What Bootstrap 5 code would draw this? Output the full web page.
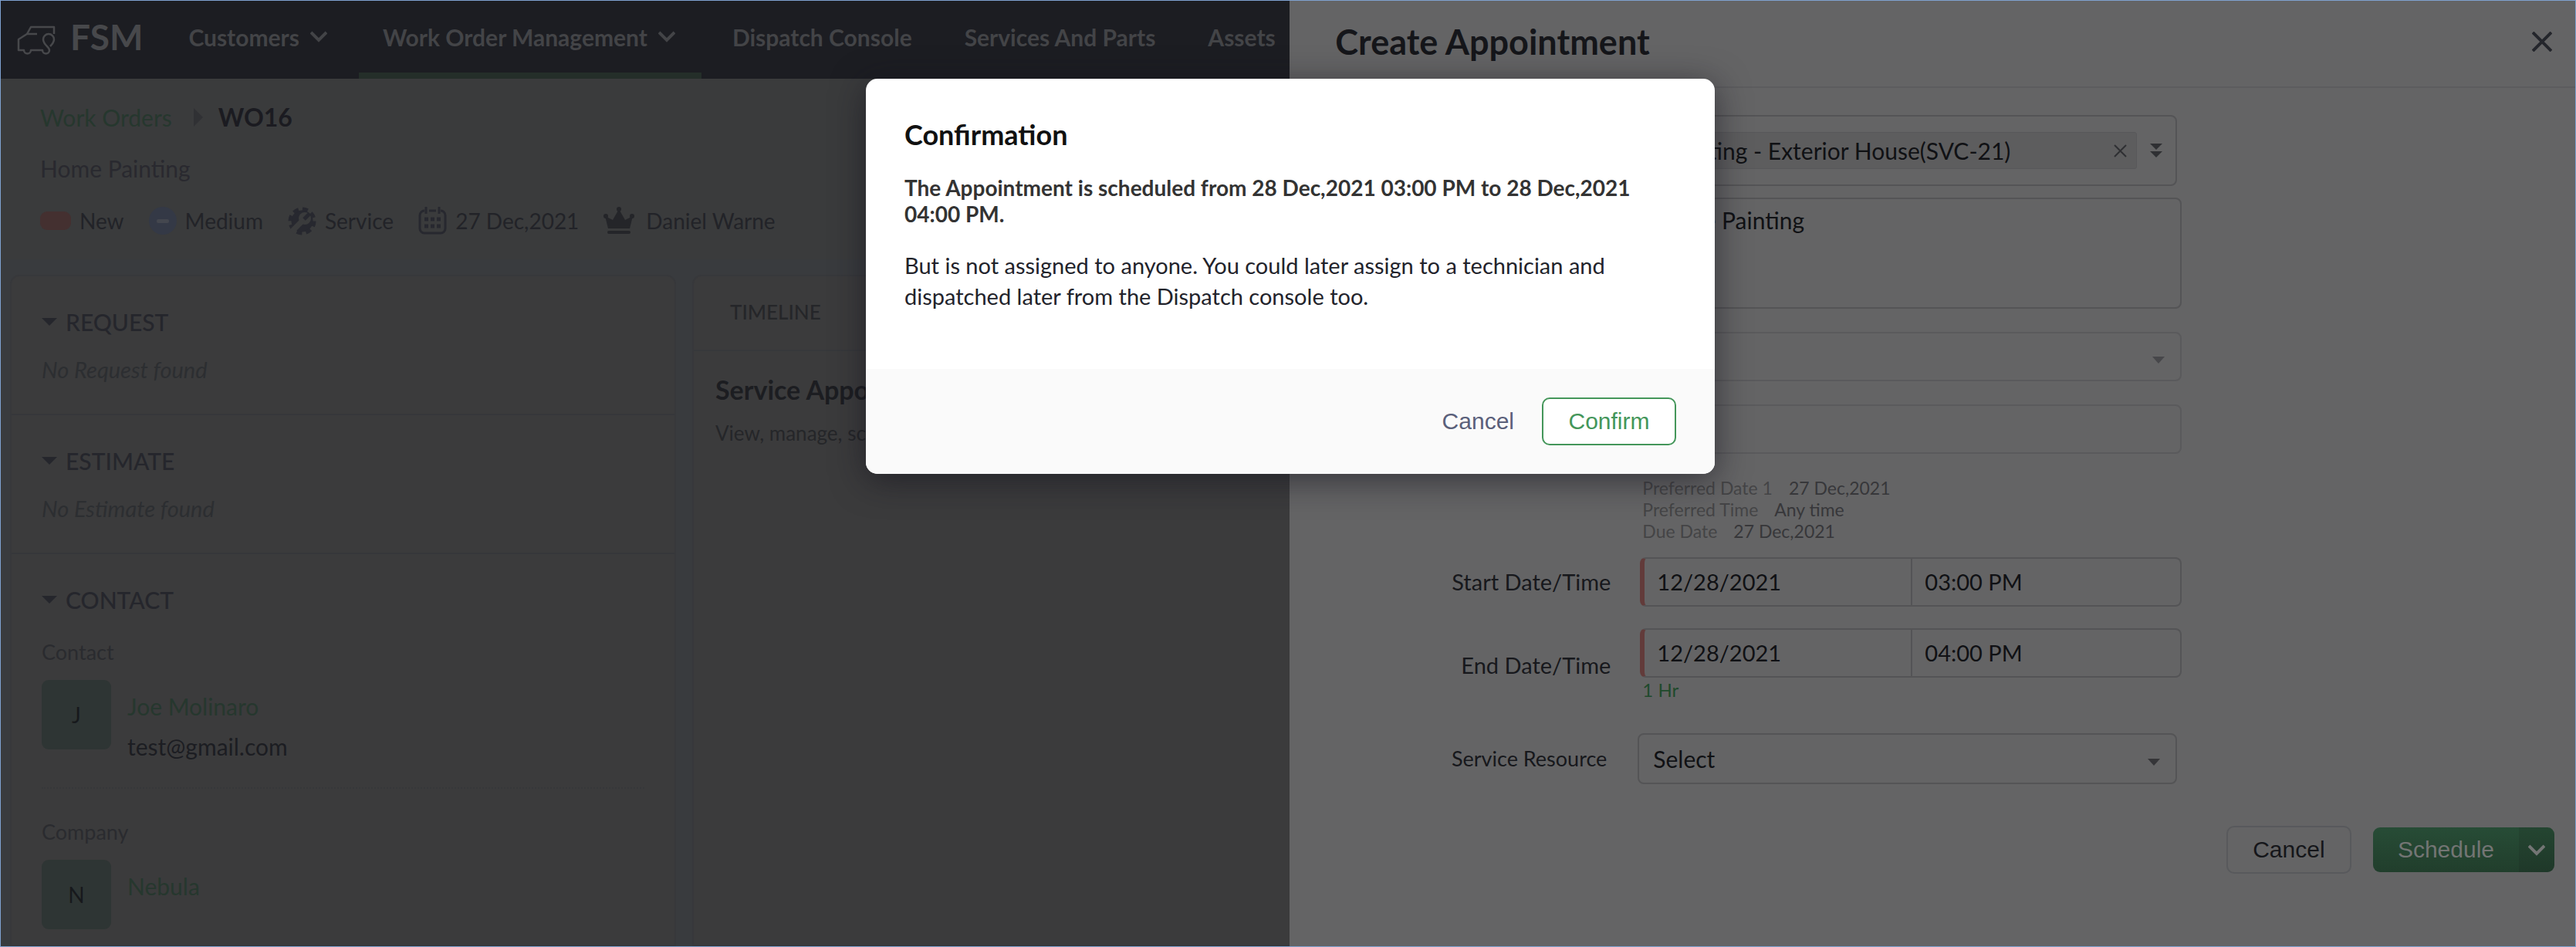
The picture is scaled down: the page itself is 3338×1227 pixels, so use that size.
<!DOCTYPE html>
<html lang="en">
<head>
<meta charset="utf-8">
<meta name="viewport" content="width=device-width, initial-scale=1">
<title>FSM - WO16</title>
<link href="https://cdn.jsdelivr.net/npm/bootstrap@5.3.0/dist/css/bootstrap.min.css" rel="stylesheet">
<style>
  body { font-family: Lato, "Liberation Sans", sans-serif; font-size: 30px; line-height: 40px; color: #1c1d22; background: #3b3b3c; }
  a { text-decoration: none; }
  svg { display: block; flex: none; }
  .app-shell { height: 100vh; overflow: hidden; border: 1px solid #7fa1d0; }
  .sans-ui { font-family: "Liberation Sans", Arial, sans-serif; }

  /* top bar */
  .top-bar { height: 101px; background: #1c1d22; padding: 0 0 8px 21px; color: #47484b; }
  .brand-name { font-size: 46px; font-weight: 700; color: #47484b; gap: 19px; margin-right: 59px; }
  .main-nav { gap: 68px; height: 101px; }
  .main-nav a { color: #434447; font-weight: 700; gap: 14px; height: 101px; padding-bottom: 8px; white-space: nowrap; }
  .main-nav .is-current { border-bottom: 8px solid #242e29; padding: 0 34px 0 31px; margin: 0 -28px 0 -27px; }

  /* work order header */
  .record-head { padding: 30px 51px 0; height: 234px; background: #3a3b3c; }
  .link-green { color: #26372e; }
  .record-id { font-size: 32px; font-weight: 700; color: #1b1b21; }
  .crumb-mark { margin: 0 20px 0 28px; }
  .record-title { color: #29292f; margin-top: 26px; }
  .record-meta { font-size: 28px; gap: 32px; color: #222328; margin-top: 28px; }
  .record-meta > span { gap: 11px; }
  .status-pill { width: 40px; height: 24px; border-radius: 9px; background: #443030; }

  /* panels */
  .panels { background: #393b3e; padding: 20px 0 0 12px; gap: 21px; flex: 1 0 0; }
  .side-card { width: 863px; background: #3b3b3c; border: 2px solid #37383b; border-radius: 12px 12px 0 0; }
  .side-card section { padding: 39px 39px 0; height: 180px; border-bottom: 2px solid #36373a; }
  .side-card section:last-child { border: 0; height: auto; }
  .side-card h2, .tab-head { font-size: 30px; line-height: 40px; font-weight: 500; margin: 0; color: #25262c; }
  .side-card h2 { gap: 11px; }
  .empty-note { font-size: 29px; font-style: italic; color: #2c2e31; margin: 22px 0 0; }
  .field-name { font-size: 27px; color: #2a2b2f; }
  .side-card h2 + .field-name { margin-top: 28px; }
  .avatar-tile { width: 90px; height: 90px; border-radius: 9px; background: #2e3534; font-size: 28px; color: #17191c; flex: none; }
  .contact-row { gap: 21px; line-height: 52px; }
  .dot-rule { border-top: 2px dotted #36373a; margin: 27px 0 36px; }

  .main-card { background: #3b3b3c; border: 2px solid #37383b; border-radius: 12px 12px 0 0; }
  .main-card .tab-head { font-size: 26px; color: #252629; padding: 26px 47px 29px; border-bottom: 2px solid #37383b; }
  .main-card h3 { font-size: 34px; line-height: 40px; font-weight: 700; color: #1c1d21; margin: 0 0 16px; }
  .main-intro { padding: 30px 28px; font-size: 26px; color: #252629; }

  /* slide-in form */
  .drawer { position: absolute; top: 1px; right: 1px; bottom: 1px; width: 49.9%; background: #646465; color: #101114; }
  .drawer-head { height: 113px; padding: 0 30px 6px 59px; border-bottom: 2px solid #5c5c5e; }
  .drawer-head h1 { font-size: 45px; font-weight: 700; margin: 0; color: #15161a; }
  .drawer-form { padding: 35px 27px 0 191px; }
  .form-line { display: grid; grid-template-columns: 225px 706px; column-gap: 35px; align-items: center; margin-bottom: 30px; }
  .form-line > label { text-align: right; color: #17181c; font-size: 29px; }
  .form-line > .label-small { font-size: 27px; padding-right: 5px; }
  .line-tight { margin-bottom: 15px; }
  .line-hints { margin-bottom: 20px; }
  .line-start { margin-bottom: 28px; }
  .line-end { margin-bottom: 40px; }
  .box { background: transparent; border: 2px solid #545456; border-radius: 8px; color: #101114; font-size: 30px; line-height: 40px; width: 702px; height: 64px; margin-left: 3px; }
  .box-narrow { width: 699px; height: 66px; margin-left: 0; }
  .box-chips { height: 92px; }
  .box-text { height: 144px; padding: 7px 16px; resize: none; }
  .box-off { border-color: #5a5a5c; }
  .box-pick { appearance: none; padding: 0 18px; height: 100%; width: 100%; border: 0; background: transparent; color: #101114; opacity: 1; }
  .pick-arrow { position: absolute; right: 20px; top: 50%; pointer-events: none; }
  .chip { background: #5d5d5e; border: 1px solid #58585a; border-radius: 3px; height: 48px; padding: 0 12px 0 24px; flex: 1; }
  .plain-btn { background: none; border: 0; padding: 0; }
  .moment { border-left: 6px solid #623b3a; overflow: hidden; font-size: 29px; }
  .moment input { background: transparent; border: 0; outline: 0; padding: 0 16px; color: #101114; width: 345px; }
  .moment input + input { border-left: 2px solid #545456; width: 349px; }
  .hints { font-size: 23px; line-height: 28px; color: #37373a; margin: 0 0 0 6px; }
  .hints dt { font-weight: 400; color: #444446; margin-right: 21px; }
  .hints dd { margin: 0; }
  .span-note { font-size: 24px; line-height: 32px; color: #1f4a2c; margin-left: 6px; }
  .actions { gap: 28px; margin-top: 54px; }
  .btn-quiet { border: 2px solid #58595c; border-radius: 10px; width: 162px; height: 62px; font-size: 30px; color: #15161a; background: none; padding: 0; }
  .btn-go { height: 58px; font-size: 30px; background: linear-gradient(#274c36, #213e2c); color: #737574; border: 0; padding: 0 32px; border-radius: 9px 0 0 9px; }
  .btn-more { background: linear-gradient(#244531, #1f3829); border: 0; width: 46px; border-radius: 0 9px 9px 0; padding: 0; color: #737574; }

  /* dialog */
  .dialog-layer { position: absolute; top: 102px; left: 6px; right: 0; pointer-events: none; }
  .dialog-card { width: 1100px; border-radius: 15px; background: #fff; overflow: hidden; pointer-events: auto; }
  .dialog-shade { border-radius: 15px; box-shadow: 0 8px 44px rgba(20, 18, 28, .6); }
  .dialog-main { padding: 50px 50px 0; height: 376px; }
  .dialog-main h2 { font-size: 36px; line-height: 44px; font-weight: 700; color: #111; margin: 0 0 30px; }
  .dialog-main strong { display: block; font-weight: 700; font-size: 28px; line-height: 34px; color: #333; margin-bottom: 30px; }
  .dialog-main p { font-size: 29px; line-height: 40px; color: #22232b; margin: 0; }
  .dialog-foot { background: #fafafa; height: 136px; padding: 0 50px; gap: 36px; }
  .btn-flat { background: none; border: 0; padding: 0; font-size: 30px; color: #5a607a; }
  .btn-line { background: #fff; border: 2px solid #44965a; border-radius: 10px; width: 174px; height: 62px; padding: 0; font-size: 30px; color: #44965a; }
</style>
</head>
<body>
<div class="app-shell position-relative d-flex flex-column">

  <header class="top-bar d-flex align-items-center flex-shrink-0">
    <a class="brand-name d-flex align-items-center" href="#">
      <svg class="mt-2" width="50" height="38" viewBox="0 0 50 38" fill="none" stroke="currentColor" stroke-width="2.500" stroke-linejoin="round"><path d="M48 11V2H18l-5 9L2 18v14h7c0 6 9 6 9 0h15c0 6 9 6 9 0 0-4-8-7-8-14a7 7 0 0 1 14 0c0 4-2 6-5 9M13 11h13"/></svg>
      FSM</a>
    <nav class="main-nav d-flex align-items-center mt-2">
      <a class="d-flex align-items-center" href="#">Customers
        <svg width="22" height="15" viewBox="0 0 22 15" fill="none" stroke="currentColor" stroke-width="4"><path d="M1 2l10 10L21 2"/></svg></a>
      <a class="is-current d-flex align-items-center" href="#">Work Order Management
        <svg width="22" height="15" viewBox="0 0 22 15" fill="none" stroke="currentColor" stroke-width="4"><path d="M1 2l10 10L21 2"/></svg></a>
      <a class="d-flex align-items-center" href="#">Dispatch Console</a>
      <a class="d-flex align-items-center" href="#">Services And Parts</a>
      <a class="d-flex align-items-center" href="#">Assets</a>
    </nav>
  </header>

  <div class="record-head flex-shrink-0">
    <div class="d-flex align-items-center">
      <a class="link-green" href="#">Work Orders</a>
      <svg class="crumb-mark" width="12" height="24" viewBox="0 0 12 24"><path d="M0 0l12 12L0 24z" fill="#303134"/></svg>
      <span class="record-id">WO16</span>
    </div>
    <div class="record-title">Home Painting</div>
    <div class="record-meta d-flex align-items-center">
      <span class="d-flex align-items-center"><i class="status-pill"></i>New</span>
      <span class="d-flex align-items-center">
        <svg width="36" height="36" viewBox="0 0 36 36"><circle cx="18" cy="18" r="18" fill="#343946"/><rect x="10" y="16" width="16" height="5" rx="2" fill="#44474f"/></svg>Medium</span>
      <span class="d-flex align-items-center">
        <svg width="37" height="37" viewBox="0 0 37 37"><circle cx="18.500" cy="18.500" r="14" fill="#27282f"/><circle cx="18.500" cy="18.500" r="15.500" fill="none" stroke="#27282f" stroke-width="5" stroke-dasharray="7 5.170"/><circle cx="22" cy="15" r="8" fill="#3a3b3c"/><path d="M5 32l14-14" stroke="#3a3b3c" stroke-width="7"/><path d="M21 16l7-7" stroke="#27282f" stroke-width="5"/></svg>Service</span>
      <span class="d-flex align-items-center">
        <svg width="37" height="36" viewBox="0 0 37 36" fill="none" stroke="#27282f" stroke-width="3"><path d="M8 5a6 6 0 0 0-6 6v17a6 6 0 0 0 6 6h21a6 6 0 0 0 6-6V11a6 6 0 0 0-6-6M10 0v9M27 0v9M14 5h9"/><path d="M8 16h21M8 25h21" stroke-width="5" stroke-dasharray="5 3"/></svg>27 Dec,2021</span>
      <span class="d-flex align-items-center">
        <svg class="me-1" width="40" height="36" viewBox="0 0 40 36" fill="#242529"><path d="M2 12l10 5 8-14 8 14 10-5-4 16H6z"/><rect x="5" y="31" width="30" height="4" rx="2"/><circle cx="3" cy="12" r="3"/><circle cx="37" cy="12" r="3"/><circle cx="20" cy="3" r="3"/></svg>Daniel Warne</span>
    </div>
  </div>

  <div class="panels d-flex">
    <aside class="side-card flex-shrink-0">
      <section>
        <h2 class="d-flex align-items-center"><svg width="20" height="10" viewBox="0 0 20 10"><path d="M0 0h20L10 10z" fill="currentColor"/></svg>REQUEST</h2>
        <p class="empty-note">No Request found</p>
      </section>
      <section>
        <h2 class="d-flex align-items-center"><svg width="20" height="10" viewBox="0 0 20 10"><path d="M0 0h20L10 10z" fill="currentColor"/></svg>ESTIMATE</h2>
        <p class="empty-note">No Estimate found</p>
      </section>
      <section>
        <h2 class="d-flex align-items-center"><svg width="20" height="10" viewBox="0 0 20 10"><path d="M0 0h20L10 10z" fill="currentColor"/></svg>CONTACT</h2>
        <div class="field-name">Contact</div>
        <div class="contact-row d-flex mt-3">
          <span class="avatar-tile d-flex align-items-center justify-content-center">J</span>
          <div class="pt-2"><a class="link-green d-block" href="#">Joe Molinaro</a><span>test@gmail.com</span></div>
        </div>
        <div class="dot-rule"></div>
        <div class="field-name">Company</div>
        <div class="contact-row d-flex mt-3">
          <span class="avatar-tile d-flex align-items-center justify-content-center">N</span>
          <div class="pt-2"><a class="link-green d-block" href="#">Nebula</a></div>
        </div>
      </section>
    </aside>
    <main class="main-card flex-grow-1">
      <div class="tab-head">TIMELINE</div>
      <div class="main-intro">
        <h3>Service Appointments</h3>
        View, manage, schedule
      </div>
    </main>
  </div>
</div>

<div class="drawer">
  <div class="drawer-head d-flex align-items-center justify-content-between">
    <h1>Create Appointment</h1>
    <button class="plain-btn" type="button" aria-label="Close"><svg width="26" height="26" viewBox="0 0 26 26" stroke="#24262c" stroke-width="4"><path d="M1 1l24 24M25 1L1 25"/></svg></button>
  </div>
  <form class="drawer-form">
    <div class="form-line line-tight">
      <span></span>
      <div class="box box-narrow box-chips d-flex align-items-center ps-2">
        <div class="chip d-flex align-items-center justify-content-between">Painting - Exterior House(SVC-21)
          <button class="plain-btn" type="button" aria-label="Remove"><svg width="17" height="17" viewBox="0 0 17 17" stroke="#2f3033" stroke-width="2"><path d="M1 1l15 15M16 1L1 16"/></svg></button></div>
        <svg class="mx-3" width="18" height="20" viewBox="0 0 18 20" fill="#2f3033"><path d="M1 1h16L9 9zM1 11h16l-8 8z"/></svg>
      </div>
    </div>
    <div class="form-line">
      <span></span>
      <textarea class="box box-text" aria-label="Summary">Home Painting</textarea>
    </div>
    <div class="form-line">
      <span></span>
      <div class="box box-off position-relative">
        <select class="box-pick" aria-label="Address" disabled><option></option></select>
        <svg class="pick-arrow" width="16" height="9" viewBox="0 0 16 9"><path d="M0 0h16L8 9z" fill="#47474a"/></svg>
      </div>
    </div>
    <div class="form-line">
      <span></span>
      <input class="box box-off" type="text" aria-label="Territory" disabled>
    </div>
    <div class="form-line line-hints">
      <span></span>
      <dl class="hints">
        <div class="d-flex"><dt>Preferred Date 1</dt><dd>27 Dec,2021</dd></div>
        <div class="d-flex"><dt>Preferred Time</dt><dd>Any time</dd></div>
        <div class="d-flex"><dt>Due Date</dt><dd>27 Dec,2021</dd></div>
      </dl>
    </div>
    <div class="form-line line-start">
      <label for="startDate">Start Date/Time</label>
      <div class="box moment d-flex"><input id="startDate" type="text" value="12/28/2021"><input type="text" aria-label="Start time" value="03:00 PM"></div>
    </div>
    <div class="form-line line-end">
      <label for="endDate">End Date/Time</label>
      <div>
        <div class="box moment d-flex"><input id="endDate" type="text" value="12/28/2021"><input type="text" aria-label="End time" value="04:00 PM"></div>
        <div class="span-note">1 Hr</div>
      </div>
    </div>
    <div class="form-line">
      <label class="label-small" for="resource">Service Resource</label>
      <div class="box box-narrow position-relative">
        <select class="box-pick" id="resource"><option>Select</option></select>
        <svg class="pick-arrow" width="16" height="9" viewBox="0 0 16 9"><path d="M0 0h16L8 9z" fill="#353538"/></svg>
      </div>
    </div>
    <div class="actions sans-ui d-flex align-items-center justify-content-end">
      <button class="btn-quiet" type="button">Cancel</button>
      <div class="d-flex">
        <button class="btn-go" type="button">Schedule</button>
        <button class="btn-more d-flex align-items-center justify-content-center" type="button" aria-label="More"><svg width="22" height="15" viewBox="0 0 22 15" fill="none" stroke="currentColor" stroke-width="4"><path d="M1 2l10 10L21 2"/></svg></button>
      </div>
    </div>
  </form>
</div>

<div class="dialog-layer d-flex justify-content-center">
  <div class="dialog-shade">
    <div class="dialog-card" role="dialog" aria-labelledby="confirmTitle">
      <div class="dialog-main">
        <h2 id="confirmTitle">Confirmation</h2>
        <strong>The Appointment is scheduled from 28 Dec,2021 03:00 PM to 28 Dec,2021 04:00 PM.</strong>
        <p>But is not assigned to anyone. You could later assign to a technician and dispatched later from the Dispatch console too.</p>
      </div>
      <div class="dialog-foot sans-ui d-flex align-items-center justify-content-end">
        <button class="btn-flat" type="button">Cancel</button>
        <button class="btn-line" type="button">Confirm</button>
      </div>
    </div>
  </div>
</div>
<script src="https://cdn.jsdelivr.net/npm/bootstrap@5.3.0/dist/js/bootstrap.bundle.min.js"></script>
</body>
</html>
